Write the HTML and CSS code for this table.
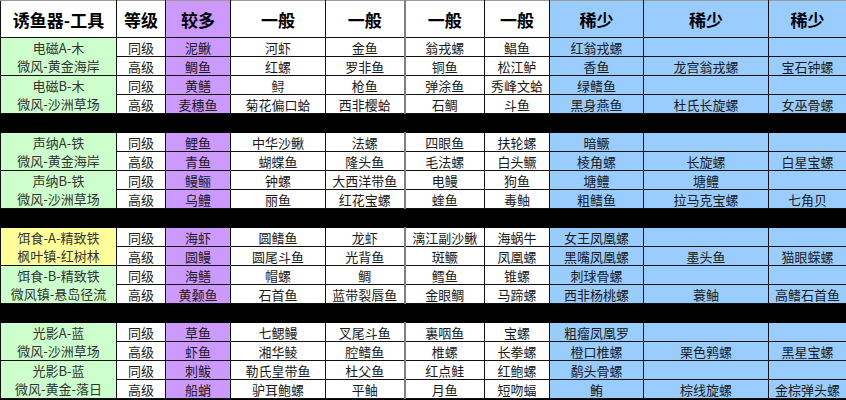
FILE: index.html
```html
<!DOCTYPE html>
<html lang="zh">
<head>
<meta charset="utf-8">
<title>诱鱼器-工具</title>
<link rel="stylesheet" href="styles.css">
</head>
<body>
<table class="grid">
<colgroup>
<col class="c1"><col class="c2"><col class="c3"><col class="c4"><col class="c5"><col class="c6"><col class="c7"><col class="c8"><col class="c9"><col class="c10">
</colgroup>
<thead>
<tr class="head">
<th>诱鱼器-工具</th><th>等级</th><th class="pu">较多</th><th>一般</th><th class="sep">一般</th><th class="sep2">一般</th><th>一般</th><th class="bl">稀少</th><th class="bl">稀少</th><th class="bl">稀少</th>
</tr>
</thead>
<tbody>
<tr class="r"><td rowspan="2" class="gr tool">电磁A-木<br>微风-黄金海岸</td><td>同级</td><td class="pu">泥鳅</td><td>河虾</td><td class="sep">金鱼</td><td class="sep2">翁戎螺</td><td>鲳鱼</td><td class="bl">红翁戎螺</td><td class="bl"></td><td class="bl"></td></tr>
<tr class="r"><td>高级</td><td class="pu">鲷鱼</td><td>红螺</td><td class="sep">罗非鱼</td><td class="sep2">铜鱼</td><td>松江鲈</td><td class="bl">香鱼</td><td class="bl">龙宫翁戎螺</td><td class="bl">宝石钟螺</td></tr>
<tr class="r"><td rowspan="2" class="gr tool">电磁B-木<br>微风-沙洲草场</td><td>同级</td><td class="pu">黄鳝</td><td>鲟</td><td class="sep">枪鱼</td><td class="sep2">弹涂鱼</td><td>秀峰文蛤</td><td class="bl">绿鳍鱼</td><td class="bl"></td><td class="bl"></td></tr>
<tr class="r"><td>高级</td><td class="pu">麦穗鱼</td><td>菊花偏口蛤</td><td class="sep">西非樱蛤</td><td class="sep2">石鲷</td><td>斗鱼</td><td class="bl">黑身燕鱼</td><td class="bl">杜氏长旋螺</td><td class="bl">女巫骨螺</td></tr>
<tr class="band"><td colspan="10"></td></tr>

<tr class="r"><td rowspan="2" class="gr tool">声纳A-铁<br>微风-黄金海岸</td><td>同级</td><td class="pu">鲤鱼</td><td>中华沙鳅</td><td class="sep">法螺</td><td class="sep2">四眼鱼</td><td>扶轮螺</td><td class="bl">暗鳜</td><td class="bl"></td><td class="bl"></td></tr>
<tr class="r"><td>高级</td><td class="pu">青鱼</td><td>蝴蝶鱼</td><td class="sep">隆头鱼</td><td class="sep2">毛法螺</td><td>白头鳜</td><td class="bl">棱角螺</td><td class="bl">长旋螺</td><td class="bl">白星宝螺</td></tr>
<tr class="r"><td rowspan="2" class="gr tool">声纳B-铁<br>微风-沙洲草场</td><td>同级</td><td class="pu">鳗鲡</td><td>钟螺</td><td class="sep">大西洋带鱼</td><td class="sep2">电鳗</td><td>狗鱼</td><td class="bl">塘鳢</td><td class="bl">塘鳢</td><td class="bl"></td></tr>
<tr class="r"><td>高级</td><td class="pu">乌鳢</td><td>丽鱼</td><td class="sep">红花宝螺</td><td class="sep2">蝰鱼</td><td>毒鲉</td><td class="bl">粗鳍鱼</td><td class="bl">拉马克宝螺</td><td class="bl">七角贝</td></tr>
<tr class="band"><td colspan="10"></td></tr>

<tr class="r"><td rowspan="2" class="ye tool">饵食-A-精致铁<br>枫叶镇-红树林</td><td>同级</td><td class="pu">海虾</td><td>圆鳍鱼</td><td class="sep">龙虾</td><td class="sep2">漓江副沙鳅</td><td>海蜗牛</td><td class="bl">女王凤凰螺</td><td class="bl"></td><td class="bl"></td></tr>
<tr class="r"><td>高级</td><td class="pu">圆鳗</td><td>圆尾斗鱼</td><td class="sep">光背鱼</td><td class="sep2">斑鳜</td><td>凤凰螺</td><td class="bl">黑嘴凤凰螺</td><td class="bl">墨头鱼</td><td class="bl">猫眼蝾螺</td></tr>
<tr class="r"><td rowspan="2" class="gr tool">饵食-B-精致铁<br>微风镇-悬岛径流</td><td>同级</td><td class="pu">海鳝</td><td>帽螺</td><td class="sep">鲷</td><td class="sep2">鳕鱼</td><td>锥螺</td><td class="bl">刺球骨螺</td><td class="bl"></td><td class="bl"></td></tr>
<tr class="r"><td>高级</td><td class="pu">黄颡鱼</td><td>石首鱼</td><td class="sep">蓝带裂唇鱼</td><td class="sep2">金眼鲷</td><td>马蹄螺</td><td class="bl">西非杨桃螺</td><td class="bl">蓑鲉</td><td class="bl">高鳍石首鱼</td></tr>
<tr class="band"><td colspan="10"></td></tr>

<tr class="r"><td rowspan="2" class="gr tool">光影A-蓝<br>微风-沙洲草场</td><td>同级</td><td class="pu">草鱼</td><td>七鳃鳗</td><td class="sep">叉尾斗鱼</td><td class="sep2">裏咽鱼</td><td>宝螺</td><td class="bl">粗瘤凤凰罗</td><td class="bl"></td><td class="bl"></td></tr>
<tr class="r"><td>高级</td><td class="pu">虾鱼</td><td>湘华鲮</td><td class="sep">腔鳍鱼</td><td class="sep2">椎螺</td><td>长拳螺</td><td class="bl">橙口椎螺</td><td class="bl">栗色鹑螺</td><td class="bl">黑星宝螺</td></tr>
<tr class="r"><td rowspan="2" class="gr tool">光影B-蓝<br>微风-黄金-落日</td><td>同级</td><td class="pu">刺鲅</td><td>勒氏皇带鱼</td><td class="sep">杜父鱼</td><td class="sep2">红点鲑</td><td>红鲍螺</td><td class="bl">鹬头骨螺</td><td class="bl"></td><td class="bl"></td></tr>
<tr class="r"><td>高级</td><td class="pu">船蛸</td><td>驴耳鲍螺</td><td class="sep">平鲉</td><td class="sep2">月鱼</td><td>短吻蝠</td><td class="bl">鲔</td><td class="bl">棕线旋螺</td><td class="bl">金棕弹头螺</td></tr>
</tbody>
</table>
</body>
</html>
```

FILE: styles.css
```css
html, body {
  margin: 0;
  padding: 0;
  background: #000;
}

.grid {
  border-collapse: collapse;
  table-layout: fixed;
  width: 846px;
  font-family: "Noto Sans CJK SC", "Noto Sans", sans-serif;
  font-size: 13px;
  color: #1a1a1a;
  background: #fff;
}

.c1 { width: 116px; }
.c2 { width: 49px; }
.c3 { width: 65px; }
.c4 { width: 95px; }
.c5 { width: 79px; }
.c6 { width: 80px; }
.c7 { width: 65px; }
.c8 { width: 94px; }
.c9 { width: 125px; }
.c10 { width: 78px; }

.grid th,
.grid td {
  border: 1px solid #111;
  padding: 0;
  text-align: center;
  vertical-align: middle;
  white-space: nowrap;
  overflow: hidden;
  line-height: 17px;
  background: #fff;
}

.grid th {
  font-size: 17px;
  font-weight: bold;
  color: #000;
  border-top: 1px solid #9a9a9a;
}

.head { height: 37px; }
.r { height: 19px; }

.grid td.sep2,
.grid th.sep2 {
  border-left: 2px solid #808080;
}

.grid .pu { background: #cc99ff; }
.grid .bl { background: #99ccff; }
.grid .gr { background: #ccffcc; }
.grid .ye { background: #ffff99; }

.grid td.tool {
  color: #333;
  line-height: 18px;
}

.band { height: 19px; }
.grid .band td {
  background: #000;
  border-color: #000;
}
```
